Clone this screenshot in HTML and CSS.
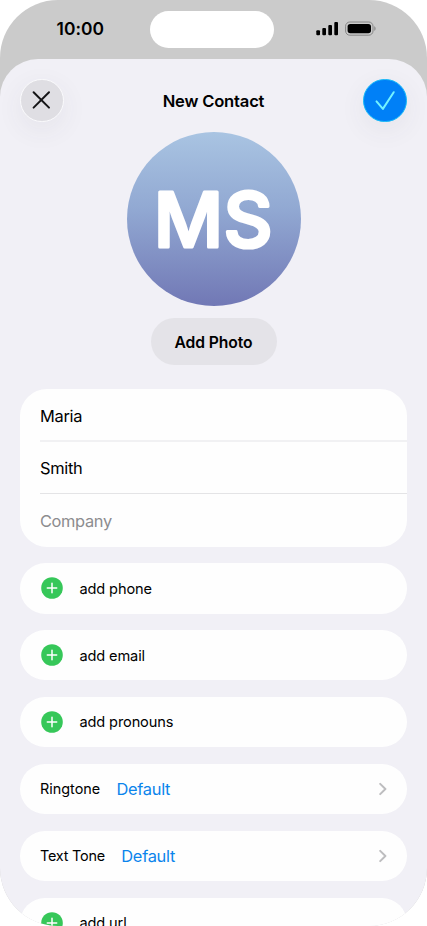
FILE: index.html
```html
<!DOCTYPE html>
<html lang="en">
<head>
<meta charset="utf-8">
<meta name="viewport" content="width=device-width, initial-scale=1">
<title>New Contact</title>
<link rel="stylesheet" href="styles.css">
</head>
<body>
<div class="screen">
  <div class="status">
    <span class="time">10:00</span>
    <div class="island"></div>
    <svg class="indicators" width="62" height="16" viewBox="0 0 62 16">
      <rect x="0.3" y="9.3" width="3.7" height="5" rx="1"/>
      <rect x="6.3" y="6.9" width="3.7" height="7.4" rx="1"/>
      <rect x="12.3" y="4.1" width="3.7" height="10.2" rx="1"/>
      <rect x="18.3" y="1.1" width="3.7" height="13.2" rx="1"/>
      <rect x="29.6" y="1" width="27.4" height="13.2" rx="4.2" fill="none" stroke="#868686"/>
      <rect x="31.6" y="2.9" width="23.4" height="9.4" rx="2.7"/>
      <path d="M58.3 5.2c1.7.7 1.7 3.9 0 4.6z" fill="#868686"/>
    </svg>
  </div>
  <main class="sheet">
    <header class="bar">
      <button class="round close" aria-label="Close"><svg width="44" height="44" viewBox="0 0 44 44"><path d="M13.6 14.2L29 29.6M29 14.2L13.6 29.6"/></svg></button>
      <h1 class="title">New Contact</h1>
      <button class="round done" aria-label="Done"><svg width="44" height="44" viewBox="0 0 44 44"><path d="M13.5 23.4l6.4 7.5L30.7 14.2"/></svg></button>
    </header>
    <div class="avatar"><svg width="174" height="174" viewBox="0 0 174 174"><text class="initials" x="86.5" y="115" text-anchor="middle">MS</text></svg></div>
    <button class="photo">Add Photo</button>
    <section class="card names">
      <div class="field">Maria</div>
      <div class="field thick">Smith</div>
      <div class="field empty">Company</div>
    </section>
    <div class="card row"><svg class="plus" width="22" height="22" viewBox="0 0 22 22"><circle cx="11" cy="11" r="10.8"/><path d="M6.3 11h9.4M11 6.3v9.4"/></svg><span>add phone</span></div>
    <div class="card row"><svg class="plus" width="22" height="22" viewBox="0 0 22 22"><circle cx="11" cy="11" r="10.8"/><path d="M6.3 11h9.4M11 6.3v9.4"/></svg><span>add email</span></div>
    <div class="card row"><svg class="plus" width="22" height="22" viewBox="0 0 22 22"><circle cx="11" cy="11" r="10.8"/><path d="M6.3 11h9.4M11 6.3v9.4"/></svg><span>add pronouns</span></div>
    <div class="card row"><span class="label">Ringtone</span><span class="value">Default</span><svg class="chevron" width="8" height="14" viewBox="0 0 8 14"><path d="M1.2 1.9L6.4 7l-5.2 5.1"/></svg></div>
    <div class="card row"><span class="label text-tone">Text Tone</span><span class="value">Default</span><svg class="chevron" width="8" height="14" viewBox="0 0 8 14"><path d="M1.2 1.9L6.4 7l-5.2 5.1"/></svg></div>
    <div class="card row"><svg class="plus" width="22" height="22" viewBox="0 0 22 22"><circle cx="11" cy="11" r="10.8"/><path d="M6.3 11h9.4M11 6.3v9.4"/></svg><span>add url</span></div>
  </main>
</div>
</body>
</html>
```
FILE: styles.css
```css
* { box-sizing: border-box; }
html, body { height: 926px; overflow: hidden; }
body { margin: 0; background: #fff; font-family: Inter, "Liberation Sans", sans-serif; color: #000; }
button { border: 0; padding: 0; font: inherit; color: inherit; }
.screen { width: 427px; height: 926px; border-radius: 58px; overflow: hidden; background: #cbcbcb; }
.status { height: 59px; display: grid; grid-template-columns: 150px 124px 1fr; }
.time { padding: 18px 0 0 56.5px; font-size: 17.4px; line-height: 21px; font-weight: 600; letter-spacing: 0.05px; }
.island { height: 37px; margin-top: 11px; border-radius: 18.5px; background: #fff; }
.indicators { margin: 21px 0 0 42px; }
.sheet { height: 868px; border-radius: 38px 38px 0 0; background: #f1f0f6; padding: 19.3px 20px 0; overflow: hidden; }
.bar { height: 44px; display: flex; align-items: center; justify-content: space-between; }
.title { margin: 0; padding-top: 1px; font-size: 16.6px; line-height: 22px; font-weight: 600; letter-spacing: -0.2px; }
.round { width: 43.5px; height: 43.5px; border-radius: 50%; display: flex; align-items: center; justify-content: center; flex: none; }
.round svg { flex: none; fill: none; stroke-linecap: round; stroke-linejoin: round; }
.close { background: #dfdee3; border: 1px solid #fafafc; box-shadow: 0 8px 26px 2px rgba(60, 60, 80, .06); }
.close path { stroke: #151517; stroke-width: 2; }
.done { background: #0080f7; border: 1px solid #17baf8; box-shadow: 0 8px 26px 2px rgba(60, 60, 80, .06); }
.done path { stroke: #73f2ff; stroke-width: 2; }
.avatar { width: 174px; height: 174px; margin: 9.7px auto 0; border-radius: 50%; background: linear-gradient(#a9c4e2, #91a8d2 45%, #7178b5); }
.avatar svg { display: block; }
.initials { font-size: 76px; font-weight: 500; letter-spacing: 0.4px; fill: #fff; stroke: #fff; stroke-width: 3.2px; stroke-linejoin: round; }
.photo { display: block; width: 126px; height: 47px; margin: 12px auto 0; border-radius: 24px; background: #e4e3e8; font-size: 15.7px; line-height: 49px; font-weight: 600; letter-spacing: -0.1px; }
.card { background: #fefefe; }
.names { margin-top: 24px; height: 157.7px; border-radius: 27px; padding-left: 20px; }
.field { height: 51px; line-height: 54px; font-size: 16.4px; letter-spacing: -0.3px; }
.field + .field { height: 53px; border-top: 1px solid #e4e4e6; }
.field + .thick { line-height: 53px; border-top: 2px solid #f1f1f3; }
.empty { color: #8c8c8e; }
.field.empty { letter-spacing: -0.35px; line-height: 55px; }
.row { height: 50.5px; margin-top: 16.4px; border-radius: 26px; padding: 0 20px; display: flex; align-items: center; font-size: 14.6px; line-height: 20px; letter-spacing: -0.14px; }
.row span { padding-top: .6px; }
.plus { margin: 0 17px 0 .5px; }
.plus circle { fill: #36c759; }
.plus path { stroke: #fff; stroke-width: 1.5; stroke-linecap: round; }
.row .label { font-size: 14.4px; letter-spacing: 0; }
.row .text-tone { letter-spacing: -0.2px; }
.value { margin-left: 16.3px; font-size: 16.4px; color: #0a84ec; letter-spacing: -0.28px; }
.chevron { margin-left: auto; fill: none; stroke: #bdbdbf; stroke-width: 2; stroke-linecap: round; stroke-linejoin: round; }
```
